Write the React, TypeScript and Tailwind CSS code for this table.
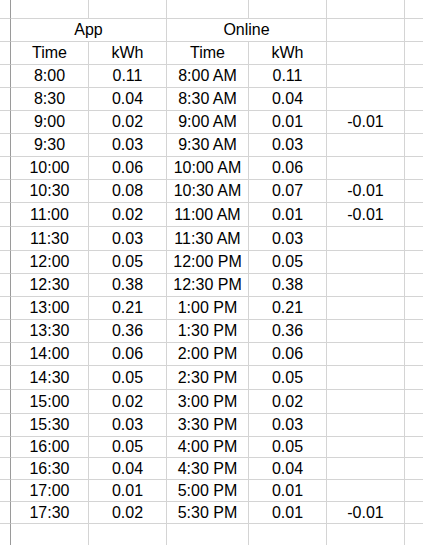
type Row = {
    h: string;
    cells: string[];
};

const rows: Row[] = [
    { h: 'h-[23px]', cells: ['8:00', '0.11', '8:00 AM', '0.11', ''] },
    { h: 'h-[23px]', cells: ['8:30', '0.04', '8:30 AM', '0.04', ''] },
    { h: 'h-[23px]', cells: ['9:00', '0.02', '9:00 AM', '0.01', '-0.01'] },
    { h: 'h-[23px]', cells: ['9:30', '0.03', '9:30 AM', '0.03', ''] },
    { h: 'h-[23px]', cells: ['10:00', '0.06', '10:00 AM', '0.06', ''] },
    { h: 'h-[23px]', cells: ['10:30', '0.08', '10:30 AM', '0.07', '-0.01'] },
    { h: 'h-[24px]', cells: ['11:00', '0.02', '11:00 AM', '0.01', '-0.01'] },
    { h: 'h-[24px]', cells: ['11:30', '0.03', '11:30 AM', '0.03', ''] },
    { h: 'h-[23px]', cells: ['12:00', '0.05', '12:00 PM', '0.05', ''] },
    { h: 'h-[23px]', cells: ['12:30', '0.38', '12:30 PM', '0.38', ''] },
    { h: 'h-[23px]', cells: ['13:00', '0.21', '1:00 PM', '0.21', ''] },
    { h: 'h-[23px]', cells: ['13:30', '0.36', '1:30 PM', '0.36', ''] },
    { h: 'h-[23px]', cells: ['14:00', '0.06', '2:00 PM', '0.06', ''] },
    { h: 'h-[24px]', cells: ['14:30', '0.05', '2:30 PM', '0.05', ''] },
    { h: 'h-[24px]', cells: ['15:00', '0.02', '3:00 PM', '0.02', ''] },
    { h: 'h-[23px]', cells: ['15:30', '0.03', '3:30 PM', '0.03', ''] },
    { h: 'h-[21px]', cells: ['16:00', '0.05', '4:00 PM', '0.05', ''] },
    { h: 'h-[22px]', cells: ['16:30', '0.04', '4:30 PM', '0.04', ''] },
    { h: 'h-[22px]', cells: ['17:00', '0.01', '5:00 PM', '0.01', ''] },
    { h: 'h-[22px]', cells: ['17:30', '0.02', '5:30 PM', '0.01', '-0.01'] },
    { h: 'h-[23px]', cells: ['', '', '', '', ''] },
];

const cols = 'grid grid-cols-[11px_78px_78px_82px_78px_78px_1fr]';
const cell = 'flex items-center justify-center border-r border-b border-[#d4d4d4] whitespace-nowrap';
const edge = 'border-r border-b border-r-[#9a9a9a] border-b-[#d4d4d4]';

export default function App() {
    return (
        <div className="h-[545px] w-[423px] overflow-hidden bg-white text-[16px] leading-none text-black [font-family:'Liberation_Sans',Arial,sans-serif]">
            {/* top partial row */}
            <div className={`${cols} h-[19px]`}>
                <div className={edge} />
                <div className={cell} />
                <div className={cell} />
                <div className={cell} />
                <div className={cell} />
                <div className={cell} />
                <div className="border-b border-[#d4d4d4]" />
            </div>

            {/* merged group headers */}
            <div className={`${cols} h-[23px]`}>
                <div className={edge} />
                <div className={`${cell} col-span-2`}>App</div>
                <div className={`${cell} col-span-2`}>Online</div>
                <div className={cell} />
                <div className="border-b border-[#d4d4d4]" />
            </div>

            <div className={`${cols} h-[23px]`}>
                <div className={edge} />
                <div className={cell}>Time</div>
                <div className={cell}>kWh</div>
                <div className={cell}>Time</div>
                <div className={cell}>kWh</div>
                <div className={cell} />
                <div className="border-b border-[#d4d4d4]" />
            </div>

            {rows.map((row, i) => (
                <div key={i} className={`${cols} ${row.h}`}>
                    <div className={edge} />
                    {row.cells.map((c, j) => (
                        <div key={j} className={cell}>{c}</div>
                    ))}
                    <div className="border-b border-[#d4d4d4]" />
                </div>
            ))}
        </div>
    );
}
